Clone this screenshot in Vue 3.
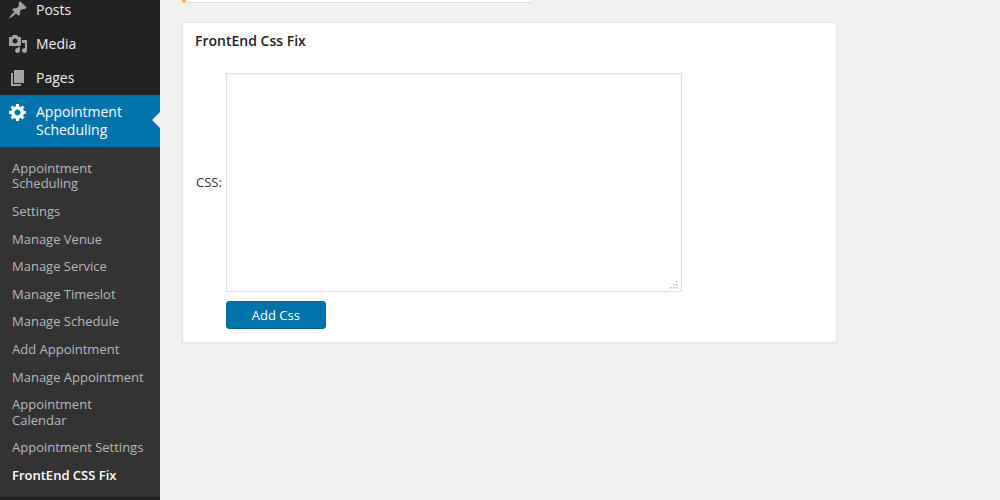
<template>
  <div class="page">
    <aside class="sidebar">
      <ul class="menu">
        <li class="menu-item">
          <svg class="icon" viewBox="0 0 20 20"><path d="M10.440 3.020l1.820-1.820 6.360 6.350-1.830 1.820c-1.050-.68-2.480-.57-3.410.36l-.75.75c-.92.93-1.040 2.350-.35 3.410l-1.830 1.820-2.410-2.410-2.800 2.790c-.42.42-3.380 2.710-3.800 2.290s1.860-3.390 2.280-3.810l2.790-2.790L4.100 9.800l1.830-1.820c1.050.69 2.480.57 3.400-.36l.75-.75c.93-.92 1.050-2.350.36-3.850z" /></svg>
          <span>Posts</span>
        </li>
        <li class="menu-item">
          <svg class="icon" viewBox="0 0 20 20"><path d="M13 11V4c0-.55-.45-1-1-1h-1.670L9 1H5L3.670 3H2c-.55 0-1 .45-1 1v7c0 .55.45 1 1 1h10c.55 0 1-.45 1-1zM7 4.500c1.380 0 2.500 1.120 2.500 2.500S8.380 9.500 7 9.500 4.500 8.380 4.500 7 5.620 4.500 7 4.500zM14 6h5v10.500c0 1.380-1.120 2.500-2.500 2.500S14 17.880 14 16.500s1.120-2.500 2.500-2.500c.17 0 .34.020.5.050V9h-3V6zm-4 8.050V13h2v3.500c0 1.380-1.120 2.500-2.500 2.500S7 17.880 7 16.500 8.120 14 9.500 14c.17 0 .34.020.5.050z" /></svg>
          <span>Media</span>
        </li>
        <li class="menu-item">
          <svg class="icon" viewBox="0 0 20 20"><path d="M6 15V2h10v13H6zm-1 1h8v2H3V5h2v11z" /></svg>
          <span>Pages</span>
        </li>
        <li class="menu-item active">
          <svg class="icon" viewBox="0 0 20 20"><path d="M18 12h-2.180c-.17.7-.44 1.350-.81 1.930l1.540 1.540-2.100 2.100-1.540-1.540c-.58.36-1.230.63-1.910.79V19H8v-2.180c-.68-.16-1.330-.43-1.910-.79l-1.540 1.540-2.120-2.120 1.540-1.540c-.36-.58-.63-1.230-.79-1.910H1V9.030h2.170c.16-.7.44-1.360.8-1.940L2.430 5.550l2.100-2.100 1.540 1.540c.58-.37 1.240-.64 1.930-.81V2h3v2.180c.68.16 1.330.43 1.910.79l1.540-1.540 2.120 2.120-1.540 1.540c.36.59.64 1.240.8 1.940H18V12zm-8.500 1.500c1.660 0 3-1.340 3-3s-1.340-3-3-3-3 1.340-3 3 1.340 3 3 3z" /></svg>
          <span>Appointment<br />Scheduling</span>
        </li>
      </ul>
      <ul class="submenu">
        <li v-for="item in subItems" :key="item.label" :class="{ current: item.current }">{{ item.label }}</li>
      </ul>
    </aside>

    <main class="content">
      <div class="notice"></div>
      <section class="card">
        <h2>FrontEnd Css Fix</h2>
        <form class="css-form" @submit.prevent>
          <label for="css">CSS:</label>
          <div class="field">
            <textarea id="css"></textarea>
            <!-- resize grip -->
            <svg class="grip" width="9" height="9" viewBox="0 0 9 9">
              <rect v-for="dot in gripDots" :key="dot.join()" :x="dot[0]" :y="dot[1]" width="1.500" height="1.500" />
            </svg>
          </div>
          <button type="submit">Add Css</button>
        </form>
      </section>
    </main>
  </div>
</template>

<script setup>
const subItems = [
  { label: 'Appointment Scheduling' },
  { label: 'Settings' },
  { label: 'Manage Venue' },
  { label: 'Manage Service' },
  { label: 'Manage Timeslot' },
  { label: 'Manage Schedule' },
  { label: 'Add Appointment' },
  { label: 'Manage Appointment' },
  { label: 'Appointment Calendar' },
  { label: 'Appointment Settings' },
  { label: 'FrontEnd CSS Fix', current: true }
];

const gripDots = [
  [6, 0],
  [3, 3],
  [6, 3],
  [0, 6],
  [3, 6],
  [6, 6]
];
</script>

<style>
html,
body {
  margin: 0;
  background: #f1f1f1;
}
</style>

<style scoped>
.page {
  display: flex;
  height: 500px;
  overflow: hidden;
  font-family: "Open Sans", sans-serif;
  font-size: 13px;
  color: #444;
}

.sidebar {
  flex: 0 0 160px;
  background: #222;
  overflow: hidden;
}

ul {
  list-style: none;
  margin: 0;
  padding: 0;
}

.menu {
  margin-top: -7px;
}

.menu-item {
  position: relative;
  display: flex;
  gap: 8px;
  padding: 8px;
  font-size: 14px;
  line-height: 18px;
  color: #eee;
}

.menu-item .icon {
  flex: 0 0 20px;
  width: 20px;
  height: 20px;
  margin: -1px 0;
  fill: #a0a5aa;
}

.menu-item.active {
  background: #0073aa;
  color: #fff;
}

.menu-item.active .icon {
  fill: #fff;
}

.menu-item.active::after {
  content: "";
  position: absolute;
  right: 0;
  top: 17px;
  border: 8px solid transparent;
  border-right-color: #f1f1f1;
}

.submenu {
  background: #333;
  padding: 7.8px 0 7.2px;
}

.submenu li {
  padding: 6px 12px;
  line-height: 15.6px;
  color: #b4b9be;
}

.submenu li.current {
  color: #fff;
  font-weight: 600;
}

.content {
  flex: 1;
  padding-left: 22px;
}

.notice {
  width: 346px;
  height: 2px;
  background: #fff;
  border-left: 4px solid #ffb900;
  box-shadow: 0 1px 1px rgba(0, 0, 0, 0.1);
}

.card {
  width: 653px;
  height: 319px;
  margin-top: 20px;
  background: #fff;
  border: 1px solid #e5e5e5;
  box-shadow: 0 1px 1px rgba(0, 0, 0, 0.04);
}

.card h2 {
  margin: 0;
  padding: 8px 12px;
  font-size: 14px;
  line-height: 19px;
  font-weight: 600;
  color: #222;
}

.css-form {
  display: grid;
  grid-template-columns: auto 456px;
  justify-content: start;
  align-items: center;
  column-gap: 4px;
  row-gap: 9px;
  padding: 15px 0 0 13px;
}

.css-form label {
  margin-bottom: 2px;
  color: #333;
}

.field {
  position: relative;
  height: 219px;
}

.field textarea {
  box-sizing: border-box;
  display: block;
  width: 456px;
  height: 219px;
  margin: 0;
  border: 1px solid #ddd;
  box-shadow: inset 0 1px 2px rgba(0, 0, 0, 0.07);
  background: #fff;
  resize: none;
}

.grip {
  position: absolute;
  right: 3px;
  bottom: 2px;
  fill: #b5b5b5;
}

.css-form button {
  grid-column: 2;
  width: 100px;
  height: 28px;
  border: 1px solid #006799;
  border-radius: 3px;
  background: #0073aa;
  color: #fff;
  font: inherit;
  padding: 0;
}
</style>
